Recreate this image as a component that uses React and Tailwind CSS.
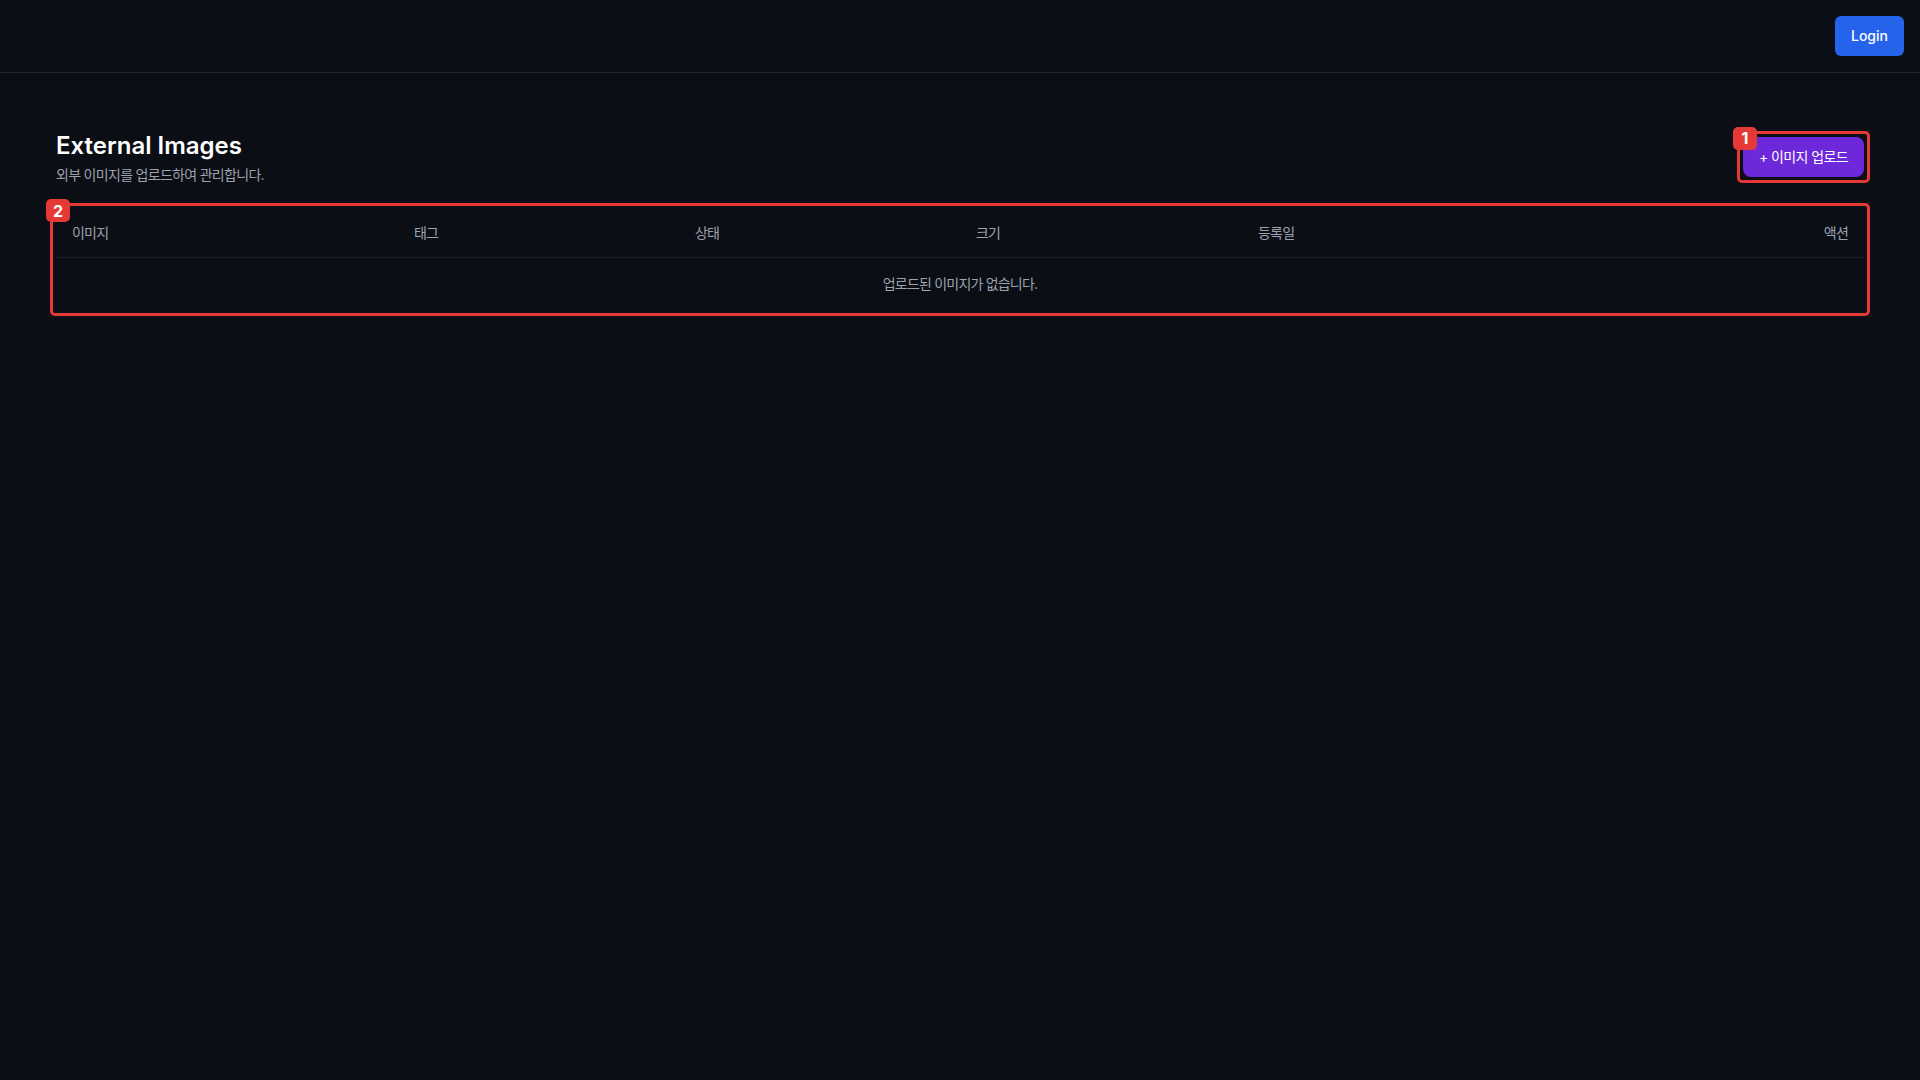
import React from "react";

const FONT = { fontFamily: 'Inter, "Noto Sans CJK KR", "Noto Sans", sans-serif' };

function Badge({ n, className }) {
  return (
    <div
      className={
        "absolute flex h-[23px] w-[24px] items-center justify-center rounded-[5px] bg-[#e53935] text-[16px] font-bold leading-none text-white " +
        className
      }
    >
      {n}
    </div>
  );
}

export default function App() {
  const cols = ["이미지", "태그", "상태", "크기", "등록일", "액션"];
  return (
    <div className="min-h-screen bg-[#0b0e15] text-white" style={FONT}>
      <header className="flex h-[73px] items-center justify-end border-b border-[#1f2430] px-4">
        <button className="h-10 rounded-md bg-[#2563eb] px-4 text-sm font-medium text-white">
          Login
        </button>
      </header>

      <main className="px-14 pt-[57px]">
        <div className="mb-6 flex items-center justify-between">
          <div>
            <h1 className="text-2xl font-semibold leading-8 text-white">External Images</h1>
            <p className="mt-[3px] text-sm leading-5 tracking-[-0.7px] text-[#9ca3af]">
              외부 이미지를 업로드하여 관리합니다.
            </p>
          </div>
          <div className="relative -mt-[2px]">
            <button className="h-10 rounded-lg bg-[#6d28d9] px-4 text-sm font-normal tracking-[-0.6px] text-white">
              + 이미지 업로드
            </button>
            <div className="pointer-events-none absolute -inset-[6px] rounded-[5px] border-[3px] border-[#e53935]" />
            <Badge n="1" className="-left-[10px] -top-[10px]" />
          </div>
        </div>

        <div className="relative">
          <table className="w-full table-fixed border-collapse text-sm">
            <colgroup>
              <col className="w-[342px]" />
              <col className="w-[281px]" />
              <col className="w-[281px]" />
              <col className="w-[282px]" />
              <col className="w-[281px]" />
              <col />
            </colgroup>
            <thead>
              <tr className="border-b border-[#1c202b]">
                {cols.map((c, i) => (
                  <th
                    key={c}
                    className={
                      "px-4 py-3.5 font-normal leading-5 tracking-[-0.8px] text-[#9ca3af] " +
                      (i === cols.length - 1 ? "text-right" : "text-left")
                    }
                  >
                    {c}
                  </th>
                ))}
              </tr>
            </thead>
            <tbody>
              <tr>
                <td
                  colSpan={6}
                  className="px-4 py-4 text-center leading-5 tracking-[-0.8px] text-[#9ca3af]"
                >
                  업로드된 이미지가 없습니다.
                </td>
              </tr>
            </tbody>
          </table>
          <div className="pointer-events-none absolute -inset-[6px] rounded-[5px] border-[3px] border-[#e53935]" />
          <Badge n="2" className="-left-[10px] -top-[10px]" />
        </div>
      </main>
    </div>
  );
}
